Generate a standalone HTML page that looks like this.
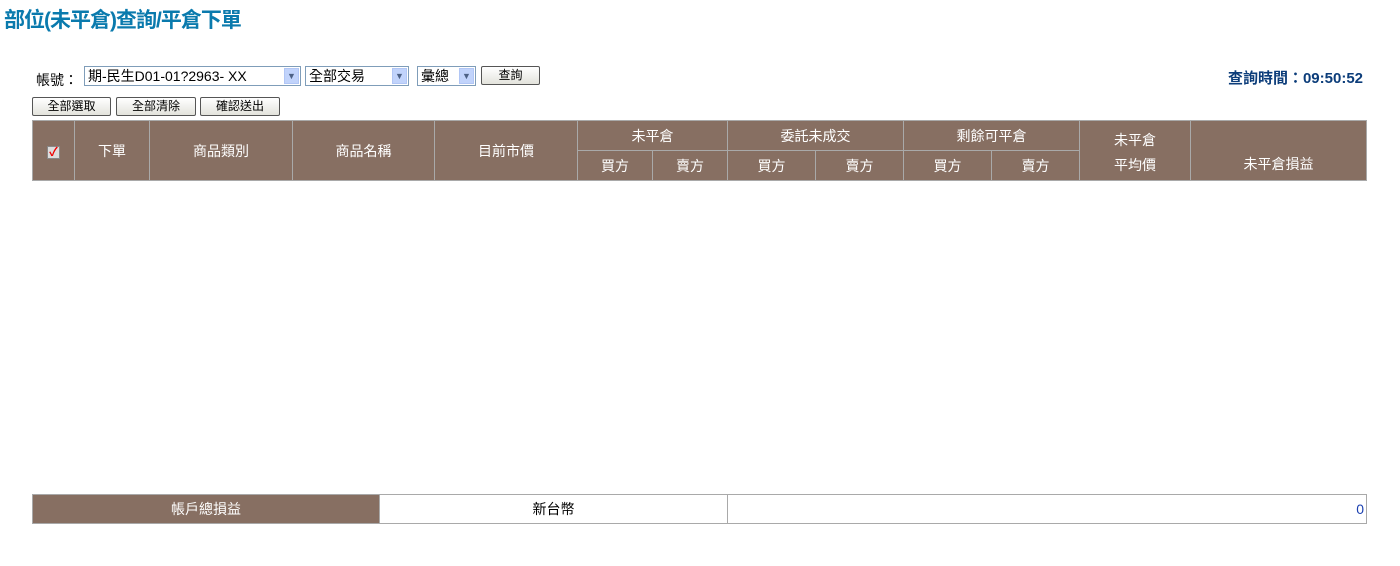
<!DOCTYPE html>
<html><head><meta charset="utf-8"><style>
body{margin:0;width:1400px;height:566px;background:#fff;font-family:"Liberation Sans","Noto Sans CJK TC",sans-serif;position:relative;overflow:hidden}
.a{position:absolute}
.title{left:4px;top:4px;font-size:21px;font-weight:bold;color:#0a7aad;letter-spacing:-1px}
.time{right:37px;top:67px;font-size:15px;font-weight:bold;color:#0c3d7a}
.sel{border:1px solid #7f9db9;height:20px;box-sizing:border-box;font-size:14px;line-height:18px;padding-left:3px;background:#fff;overflow:hidden;white-space:nowrap}
.arr{position:absolute;right:1px;top:1px;width:15px;height:16px;background:#c1d3fb;border:1px solid #b1c6f5;box-sizing:border-box;font-size:9px;color:#4d6185;text-align:center;line-height:14px}
.btn{border:1px solid #555;border-radius:2px;background:linear-gradient(#fff,#e3e3dc);height:19px;box-sizing:border-box;font-size:12px;text-align:center;line-height:17px}
table{border-collapse:collapse;position:absolute}
td{border:1px solid #a9a9a9;color:#fff;font-size:14px;text-align:center;padding:0}
.h td{background:#876f62}
</style></head><body>
<div class="a title">部位(未平倉)查詢/平倉下單</div>
<div class="a" style="left:36px;top:70px;font-size:14px">帳號：</div>
<div class="a sel" style="left:84px;top:66px;width:217px">期-民生D01-01?2963-&nbsp;XX<div class="arr">▼</div></div>
<div class="a sel" style="left:305px;top:66px;width:104px">全部交易<div class="arr">▼</div></div>
<div class="a sel" style="left:417px;top:66px;width:59px">彙總<div class="arr">▼</div></div>
<div class="a btn" style="left:481px;top:66px;width:59px">查詢</div>
<div class="a time">查詢時間：09:50:52</div>
<div class="a btn" style="left:32px;top:97px;width:79px">全部選取</div>
<div class="a btn" style="left:116px;top:97px;width:80px">全部清除</div>
<div class="a btn" style="left:200px;top:97px;width:80px">確認送出</div>
<table class="h" style="left:32px;top:120px;width:1335px;height:61px;border:1px solid #999">
<tr style="height:30px">
<td rowspan="2" style="width:41px"><span style="display:inline-block;width:11px;height:11px;background:#ddd;border:1px solid #888;color:#e00;font-size:12px;line-height:10px;font-weight:bold">✓</span></td>
<td rowspan="2" style="width:74px">下單</td>
<td rowspan="2" style="width:142px">商品類別</td>
<td rowspan="2" style="width:141px">商品名稱</td>
<td rowspan="2" style="width:142px">目前市價</td>
<td colspan="2">未平倉</td>
<td colspan="2">委託未成交</td>
<td colspan="2">剩餘可平倉</td>
<td rowspan="2" style="width:110px;line-height:25px;padding-top:4px">未平倉<br>平均價</td>
<td rowspan="2" style="padding-top:27px">未平倉損益</td>
</tr>
<tr>
<td style="width:74px">買方</td><td style="width:74px">賣方</td>
<td style="width:87px">買方</td><td style="width:87px">賣方</td>
<td style="width:87px">買方</td><td style="width:87px">賣方</td>
</tr>
</table>
<table style="left:32px;top:494px;width:1335px;height:30px;border:1px solid #999">
<tr><td style="background:#876f62;width:346px">帳戶總損益</td>
<td style="color:#000;width:347px">新台幣</td>
<td style="color:#1a3fb0;text-align:right;padding-right:2px">0</td></tr>
</table>
</body></html>
